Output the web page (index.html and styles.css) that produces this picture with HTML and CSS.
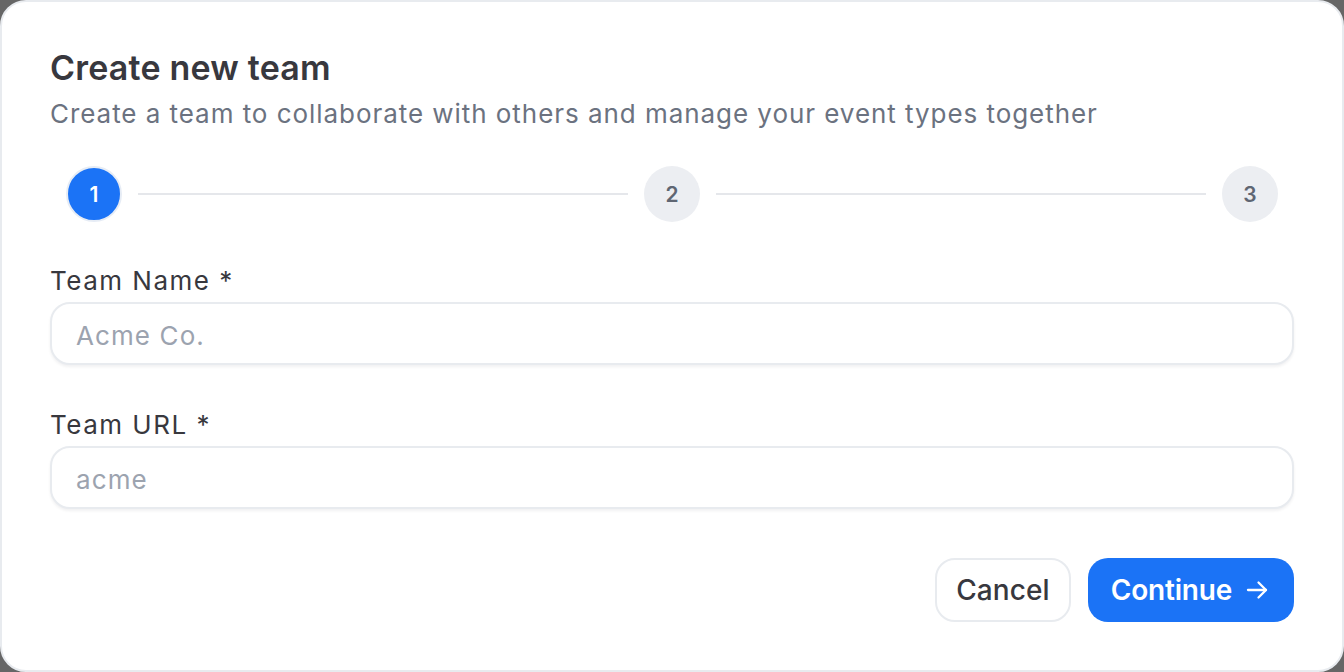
FILE: index.html
```html
<!DOCTYPE html>
<html>
<head>
<meta charset="utf-8">
<link rel="stylesheet" href="styles.css">
</head>
<body>
<div class="card">
  <h1 class="title">Create new team</h1>
  <p class="subtitle">Create a team to collaborate with others and manage your event types together</p>
  <div class="stepper">
    <div class="step active">1</div>
    <div class="line"></div>
    <div class="step">2</div>
    <div class="line"></div>
    <div class="step">3</div>
  </div>
  <div class="field">
    <label class="label">Team Name *</label>
    <input class="input" type="text" placeholder="Acme Co.">
  </div>
  <div class="field field-second">
    <label class="label">Team URL *</label>
    <input class="input" type="text" placeholder="acme">
  </div>
  <div class="actions">
    <button class="btn btn-cancel">Cancel</button>
    <button class="btn btn-primary">Continue
      <svg class="arrow" viewBox="0 0 22 22" width="22" height="22" fill="none" stroke="currentColor" stroke-width="2.3" stroke-linecap="round" stroke-linejoin="round"><path d="M2 11h18"/><path d="M12.5 3.5L20 11l-7.5 7.5"/></svg>
    </button>
  </div>
</div>
</body>
</html>
```

FILE: styles.css
```css
* { box-sizing: border-box; }
html, body { margin: 0; padding: 0; }
body {
  background: #666666;
  font-family: Inter, "Noto Sans", sans-serif;
  width: 1344px;
  height: 672px;
  overflow: hidden;
}
.card {
  width: 1344px;
  height: 672px;
  background: #ffffff;
  border: 2px solid #e8ebef;
  border-radius: 26px;
  padding: 46px 48px 0 48px;
  display: flex;
  flex-direction: column;
}
.title {
  margin: 0;
  font-size: 34px;
  line-height: 40px;
  font-weight: 600;
  color: #38383e;
  letter-spacing: 0.2px;
}
.subtitle {
  margin: 10px 0 0 0;
  font-size: 26px;
  line-height: 32px;
  color: #6b7280;
  font-weight: 400;
  letter-spacing: 0.95px;
}
.stepper {
  display: flex;
  align-items: center;
  gap: 16px;
  padding: 0 16px;
  margin-top: 36px;
}
.step {
  width: 56px;
  height: 56px;
  border-radius: 50%;
  background: #eceef2;
  color: #5f6673;
  font-size: 21px;
  font-weight: 600;
  display: flex;
  align-items: center;
  justify-content: center;
  flex: none;
}
.step.active {
  background: #1b73f6;
  color: #ffffff;
  border: 2px solid #e6ecf5;
}
.line {
  flex: 1;
  height: 2px;
  background: #e5e7eb;
}
.field {
  display: flex;
  flex-direction: column;
  margin-top: 43px;
}
.field-second { margin-top: 44px; }
.label {
  font-size: 26px;
  line-height: 32px;
  font-weight: 400;
  color: #38383e;
  letter-spacing: 1.5px;
}
.input {
  margin-top: 5px;
  height: 63px;
  border: 2px solid #e8ebef;
  border-radius: 20px;
  padding: 4px 24px 0 24px;
  font-family: Inter, "Noto Sans", sans-serif;
  font-size: 26px;
  letter-spacing: 1.1px;
  color: #38383e;
  background: #ffffff;
  box-shadow: 0 2px 3px rgba(15, 23, 42, 0.06);
  outline: none;
}
.input::placeholder { color: #9ca3af; }
.actions {
  display: flex;
  justify-content: flex-end;
  gap: 17px;
  margin-top: 49px;
}
.btn {
  height: 64px;
  border-radius: 20px;
  font-family: Inter, "Noto Sans", sans-serif;
  font-size: 28px;
  display: flex;
  align-items: center;
  cursor: pointer;
}
.btn-cancel {
  background: #ffffff;
  border: 2px solid #e8ebef;
  color: #38383e;
  font-weight: 500;
  padding: 0 19px;
  letter-spacing: 0.1px;
}
.btn-primary {
  background: #1b73f6;
  border: none;
  color: #ffffff;
  font-weight: 600;
  padding: 0 26px 0 23px;
  gap: 14px;
  letter-spacing: -0.2px;
}
.arrow { width: 22px; height: 22px; flex: none; }
```
